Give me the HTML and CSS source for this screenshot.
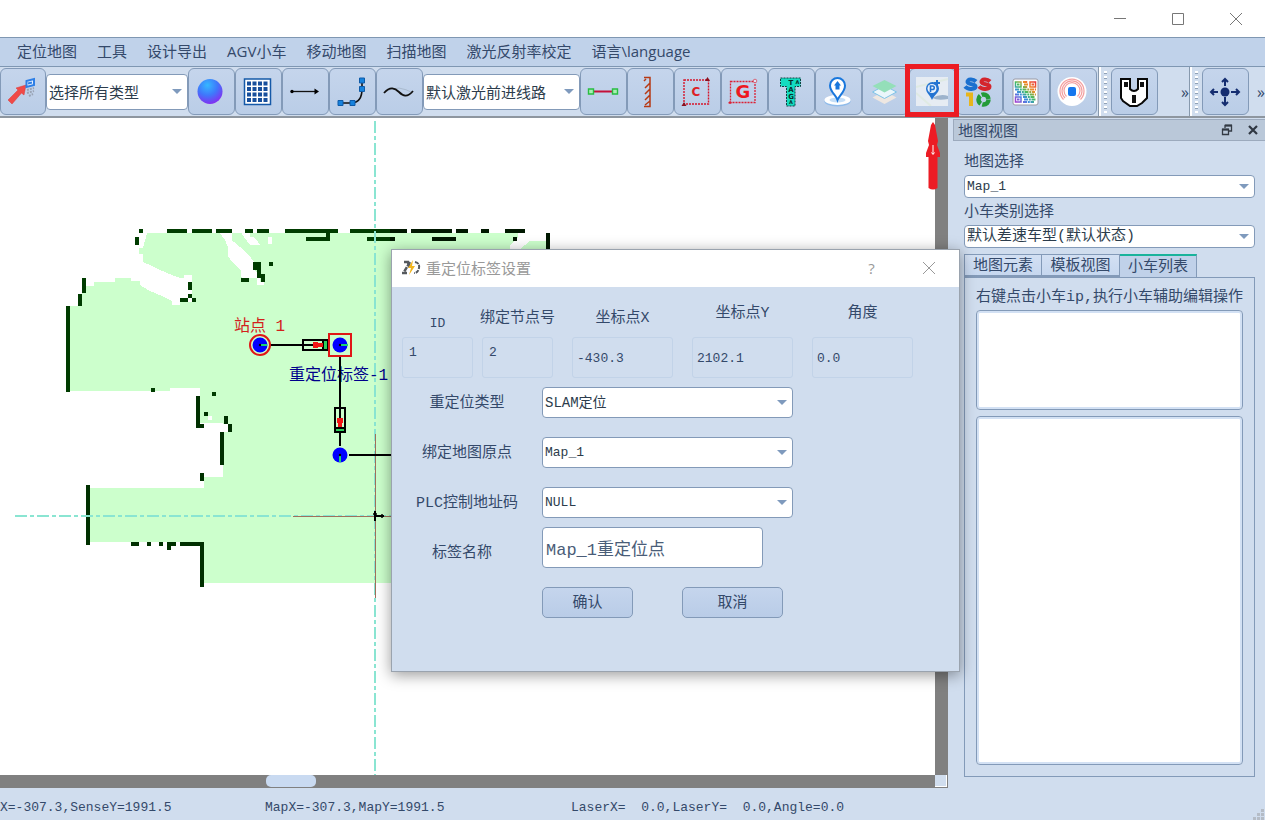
FILE: index.html
```html
<!DOCTYPE html>
<html lang="zh-CN">
<head>
<meta charset="utf-8">
<title>重定位标签设置</title>
<link rel="stylesheet" href="styles.css">
</head>
<body>
<header class="titlebar">
  <button class="win-btn" aria-label="最小化"><svg width="14" height="14" viewBox="0 0 14 14"><path d="M1 6.500H13"/></svg></button>
  <button class="win-btn" aria-label="最大化"><svg width="14" height="14" viewBox="0 0 14 14"><path d="M1.500 1.500H12.500V12.500H1.500Z"/></svg></button>
  <button class="win-btn" aria-label="关闭"><svg width="14" height="14" viewBox="0 0 14 14"><path d="M1 1L13 13M13 1L1 13"/></svg></button>
</header>

<nav class="menubar">
  <a href="#">定位地图</a><a href="#">工具</a><a href="#">设计导出</a><a href="#">AGV小车</a><a href="#">移动地图</a><a href="#">扫描地图</a><a href="#">激光反射率校定</a><a href="#">语言\language</a>
</nav>

<div class="toolbar">
  <div class="tools tools-main">
    <button class="tool tool-first" aria-label="选择"><svg width="32" height="32" viewBox="0 0 32 32"><path d="M1 24L11 14L9 12L19 9L17 19L14.500 17L5 28Z" fill="#f04a48" stroke="#d93838" stroke-width=".5"/><path d="M19.500 5L27 3V9L19.500 11Z" fill="#e8f2ff" stroke="#2e7fe6" stroke-width="2"/><path d="M21 7.500L25 6.500" stroke="#2e7fe6" stroke-width="2"/><path d="M20 14L27 12M20 17L27 15M22 20L26 18" stroke="#9aa4b5" stroke-width="2" stroke-dasharray="2 1"/></svg></button>
    <span class="select tool-select type-select"><select aria-label="元素类型"><option>选择所有类型</option></select></span>
    <button class="tool" aria-label="球体"><svg width="32" height="32" viewBox="0 0 32 32"><defs><radialGradient id="ball" cx=".4" cy=".25" r=".8"><stop offset="0" stop-color="#35b8ff"/><stop offset=".5" stop-color="#3f78fb"/><stop offset="1" stop-color="#8a28f0"/></radialGradient></defs><circle cx="15" cy="15.500" r="12.500" fill="url(#ball)"/></svg></button>
    <button class="tool" aria-label="网格"><svg width="32" height="32" viewBox="0 0 32 32"><path d="M2.500 3H28.500V28.500H2.500Z" fill="#fff" stroke="#1559a8" stroke-width="1.500"/><path d="M5 7.500H27M5 13H27M5 18.500H27M5 24H27" stroke="#174f9c" stroke-width="4" stroke-dasharray="4 1.500"/></svg></button>
    <button class="tool" aria-label="直线"><svg width="32" height="32" viewBox="0 0 32 32"><path d="M3 15.500H26" stroke="#111" stroke-width="1.300"/><circle cx="3" cy="15.500" r="1.700"/><path d="M30 15.500L25.500 12.500V18.500Z"/></svg></button>
    <button class="tool" aria-label="曲线"><svg width="32" height="32" viewBox="0 0 32 32"><path d="M5 27H16Q26 26 26 13V5" fill="none" stroke="#111" stroke-width="1.600"/><path d="M2 24.500H7V29.500H2ZM14 24.500H19V29.500H14ZM23.500 10.500H28.500V15.500H23.500ZM23.500 2H28.500V7H23.500Z" fill="#1682dd" stroke="#0e5ba8"/></svg></button>
    <button class="tool" aria-label="样条"><svg width="32" height="32" viewBox="0 0 32 32"><path d="M2 16Q9 12 16 12Q23 13 30 17" fill="none" stroke="#9fb0c2" stroke-width=".7"/><path d="M1 17C7 10 12 12 16 16S24 22 30 15" fill="none" stroke="#111" stroke-width="1.800"/></svg></button>
    <span class="select tool-select route-select"><select aria-label="默认线路"><option>默认激光前进线路</option></select></span>
    <button class="tool" aria-label="线段"><svg width="32" height="32" viewBox="0 0 32 32"><path d="M5 15.500H27" stroke="#c41039" stroke-width="2"/><path d="M1.500 13H6.500V18H1.500ZM25.500 13H30.500V18H25.500Z" fill="#a9eeb4" stroke="#29bd42" stroke-width="1.400"/></svg></button>
    <button class="tool" aria-label="墙体"><svg width="32" height="32" viewBox="0 0 32 32"><path d="M10 1.500H16V30.500H10M10 5L12 3M11 12L16 7M11 18L16 13M11 24L16 19M11 29L16 25" fill="none" stroke="#b73913" stroke-width="1.500"/></svg></button>
    <button class="tool" aria-label="区域 C"><svg width="32" height="32" viewBox="0 0 32 32"><path d="M3 4H27.500V28H3Z" fill="none" stroke="#d6162b" stroke-width="1.400" stroke-dasharray="2 1"/><path d="M26.500 1L29 5H24ZM3 26L5.500 30H.5Z" fill="#8c101d"/><text x="15" y="20" class="icon-letter icon-c">C</text></svg></button>
    <button class="tool" aria-label="区域 G"><svg width="32" height="32" viewBox="0 0 32 32"><path d="M2.500 5.500H27V26.500H2.500Z" fill="none" stroke="#dc2034" stroke-width="1.300" stroke-dasharray="2 1"/><circle cx="27" cy="5" r="1.800" fill="#dce6f5" stroke="#dc2034" stroke-width=".6"/><path d="M0 27L2 25L4 27L2 28Z" fill="#dc2034"/><text x="15" y="22" class="icon-letter icon-g">G</text></svg></button>
    <button class="tool" aria-label="标签"><svg width="32" height="32" viewBox="0 0 32 32"><path d="M5.500 2H25.500V10.500H20V30H11.500V10.500H5.500Z" fill="#14dcc0" stroke="#133f42" stroke-dasharray="2 1"/><text x="16" y="9" class="icon-letter icon-tag">T</text><text x="16" y="16" class="icon-letter icon-tag">A</text><text x="16" y="23" class="icon-letter icon-tag">G</text><text x="16" y="28" class="icon-letter icon-mini">A</text><text x="22.500" y="8" class="icon-letter icon-mini">A</text></svg></button>
    <button class="tool" aria-label="定位点"><svg width="32" height="32" viewBox="0 0 32 32"><ellipse cx="15.500" cy="25.500" rx="13" ry="5" fill="#8fbbea"/><ellipse cx="15.500" cy="24" rx="13" ry="5" fill="#fff"/><ellipse cx="15.500" cy="24" rx="8" ry="2.500" fill="#c5def6"/><path d="M15.500 24C14 19 8 16 8 9.500A7.500 7.500 0 0 1 23 9.500C23 16 17.500 19 15.500 24Z" fill="#fff" stroke="#1977dc" stroke-width="2"/><path d="M15.500 5L19 9.500H17.500V13.500H13.500V9.500H12Z" fill="#1977dc"/></svg></button>
    <button class="tool" aria-label="图层"><svg width="32" height="32" viewBox="0 0 32 32"><path d="M15.500 15L27.500 21.500L15.500 28L3.500 21.500Z" fill="#eee7e1"/><path d="M15.500 9.500L27.500 16L15.500 22.500L3.500 16Z" fill="#eaf6fb" stroke="#7ec3e8"/><path d="M15.500 4L27.500 10L15.500 16.500L3.500 10Z" fill="#94dfb9"/></svg></button>
    <span class="callout">
      <button class="tool" aria-label="重定位标签"><svg width="32" height="29" viewBox="0 0 32 29"><path d="M0 0H32V29H0Z" fill="#e6ecf3"/><path d="M0 10L32 2M0 16L15 29" stroke="#dfeae3" stroke-width="2"/><path d="M16 21Q25 16 32 19V22Q22 24 16 21" fill="#9db3cc"/><path d="M16 23C14 18 10 16 10 11.500A6.500 6.500 0 0 1 23 11.500C23 16 18 18 16 23Z" fill="#2474d2"/><circle cx="16" cy="11.500" r="4.500" fill="#e9f2fc"/><path d="M14.500 15V9H16.500A1.700 1.700 0 0 1 16.500 12.500H15" fill="none" stroke="#2474d2" stroke-width="1.600"/><path d="M21 3V9M18 6H24" stroke="#2474d2" stroke-width="2"/></svg></button>
      <svg class="callout-arrow" width="14" height="68" viewBox="0 0 14 68"><path d="M7 0L9 3L12 19L11 23L14 31V35H11.500V66Q7 69 2.500 66V35H0V31L3 23L2 19L5 3Z" fill="#ec1c24"/><path d="M7 23V32M5.500 30.500L7 32.500L8.500 30.500" fill="none" stroke="#fff"/></svg>
    </span>
    <button class="tool" aria-label="SSIO"><svg width="32" height="32" viewBox="0 0 32 32"><g fill="none" stroke-width="4"><path d="M13 5.500C10 2.500 4 3 4.500 6S12.500 7.500 12.500 10.500S5 14 2 10.500" stroke="#1b70cf"/><path d="M27 5.500C24 2.500 18 3 18.500 6S26.500 7.500 26.500 10.500S19 14 16 10.500" stroke="#d4252c"/><path d="M3 18.500H8V30" stroke="#e8b51d"/><circle cx="20.500" cy="23.500" r="5" stroke="#249b38" stroke-width="4.500" stroke-dasharray="9 1.500"/></g></svg></button>
    <button class="tool" aria-label="二维码"><svg width="32" height="32" viewBox="0 0 32 32"><defs><linearGradient id="rainbow" gradientUnits="userSpaceOnUse" x1="25" y1="5" x2="6" y2="26"><stop stop-color="#e8333c"/><stop offset=".3" stop-color="#f0902b"/><stop offset=".5" stop-color="#42bd62"/><stop offset=".7" stop-color="#3c8de3"/><stop offset="1" stop-color="#a23ed0"/></linearGradient></defs><rect x="3" y="3" width="25" height="26" rx="2" fill="#fff" stroke="#9b9ba5"/><g fill="none" stroke="url(#rainbow)"><path d="M5.500 6H11V11H5.500ZM20 6H25.500V11H20ZM5.500 21H11V26H5.500Z" stroke-width="1.500"/><path d="M7 8.500H9.500M21.500 8.500H24M7 23.500H9.500" stroke-width="2"/><path d="M13 6H18M14 8.500H18M13 11H18M5 13.500H26M7 16H25M5 18.500H26M13 21H25M14 23.500H26M13 26H24" stroke-width="2.200" stroke-dasharray="4 .8 2 .7"/></g></svg></button>
    <button class="tool" aria-label="雷达"><svg width="32" height="32" viewBox="0 0 32 32"><circle cx="15" cy="15.500" r="14.500" fill="#fff"/><g fill="none" stroke="#f4a0a0" stroke-width="1.200"><path d="M6.500 23.500A12 12 0 1 1 23.500 23.500"/><path d="M8 22A10 10 0 1 1 22 22"/><path d="M9.500 20.500A8 8 0 1 1 20.500 20.500"/></g><circle cx="15" cy="15.500" r="6" fill="#fff"/><rect x="11" y="11" width="8" height="9" rx="2" fill="#1677ee"/></svg></button>
  </div>
  <div class="tools tools-side">
    <span class="grip"></span>
    <button class="tool" aria-label="插座"><svg width="32" height="32" viewBox="0 0 32 32"><path d="M3 3H12V13Q16 17 20 13V3H29V22L24 27L19 30H12L5 25L3 22Z" fill="#fff" stroke="#080808" stroke-width="2"/><path d="M6 6H10V11H6ZM22 6H26V11H22ZM14 19H18V27H14Z" fill="#111"/></svg></button>
    <button class="more" aria-label="更多工具">»</button>
  </div>
  <div class="tools tools-move">
    <span class="grip"></span>
    <button class="tool" aria-label="移动"><svg width="32" height="32" viewBox="0 0 32 32"><path d="M16 3V10M16 21V29M2 16H9M22 16H30M13 6L16 3L19 6M13 26L16 29L19 26M5 13L2 16L5 19M27 13L30 16L27 19" fill="none" stroke="#142d70" stroke-width="2"/><circle cx="16" cy="16" r="4.500" fill="#142d70"/></svg></button>
    <button class="more" aria-label="更多操作">»</button>
  </div>
</div>

<main class="workspace">
  <section class="map-view" aria-label="地图">
    <div class="map-canvas">
      <svg width="935" height="657" viewBox="0 118 935 657">
        <g shape-rendering="crispEdges">
          <path fill="#cfc" d="M147 233H518V238L510 245V249H520L530 241H547V583H204V542H90V488H204V477H223V423H200V388H170V391H70V306H82V294L86 286H94V282H115V278H131V281H140V285L148 290L164 297L172 301V305H180V302H192V275H184V278H180L172 275L160 270L150 265L143 262V254H139V248H143Z"/>
          <g transform="translate(50 220) scale(.333333)">
            <path fill="#fff" d="M510 40H545V60L575 85L600 110L612 125V150L630 165V185H642V195H620V175H575L572 150L550 130L535 110L533 80L525 60ZM575 40H600V50H610L632 75H600L585 55ZM655 50H667V72H655Z"/>
            <path fill="#003c00" d="M268 28h11v11h-11zM255 52h12v22h-12zM352 28h60v11h-60zM427 28h60v11h-60zM499 28h48v11h-48zM585 28h24v11h-24zM621 28h36v11h-36zM705 28h158v11h-158zM828 38h11v24h-11zM768 52h60v11h-60zM900 28h120v11h-120zM952 52h68v11h-68zM97 175h11v45h-11zM85 222h11v36h-11zM48 258h12v257h-12zM415 187h11v24h-11zM414 222h12v12h-12zM390 235h24v11h-24zM426 235h12v11h-12zM609 127h24v24h-24zM657 127h12v11h-12zM622 150h12v24h-12zM573 175h24v11h-24zM634 162h11v24h-11zM303 504h12v12h-12zM486 516h12v12h-12z"/>
          </g>
          <g transform="translate(60 380) scale(.333333)">
            <path fill="#fff" d="M444 108h12v11h-12zM480 132h24v24h-24z"/>
            <path fill="#003000" d="M408 48h12v95h-12zM420 132h12v11h-12zM432 97h12v11h-12zM492 108h12v24h-12zM504 132h12v24h-12zM480 156h12v98h-12zM420 280h12v24h-12zM78 316h12v180h-12zM213 486h24v11h-24zM261 486h12v11h-12zM297 486h12v11h-12zM321 486h27v11h-27zM321 497h12v12h-12zM360 486h72v11h-72zM420 486h12v134h-12z"/>
          </g>
          <g transform="translate(390 220) scale(.333333)">
            <path fill="#001800" d="M0 28h50v11h-50zM63 28h123v11h-123zM198 28h36v11h-36zM273 28h24v11h-24zM345 28h60v11h-60zM369 52h12v11h-12zM126 52h72v11h-72zM0 52h16v11h-16zM468 40h12v50h-12zM393 86h12v4h-12z"/>
          </g>
        </g>
        <g stroke="#8ae5d2" stroke-width="2" stroke-dasharray="12 3 4 3"><path d="M375 121V775"/><path d="M15 516H391"/></g>
        <path d="M375.500 434V598M293 516.500H391" stroke="#a0705c"/>
        <path d="M375 511V521M375 516H384" fill="none" stroke="#000" stroke-width="2"/><path d="M373 514H377M382 514V518" stroke="#000" stroke-width="1.500"/>
        <text x="234" y="331" class="map-text station">站点 1</text>
        <text x="289" y="380" class="map-text marker">重定位标签-1</text>
        <path d="M270 345H330M340 356V446M349 455H391" stroke="#000" stroke-width="2"/>
        <g fill="none" stroke="#000" stroke-width="2">
          <path d="M303 340H327V350H303ZM323 340V350M335 408V432H345V408ZM335 428H345"/>
        </g>
        <path d="M313 342H318V343H323V347H318V348H313ZM337 418H343V423H342V427H338V423H337Z" fill="#f31515"/>
        <path d="M324 341H327V349H324ZM336 429H344V431H336Z" fill="#2fd05b"/>
        <g fill="#00f"><circle cx="260" cy="345" r="7.500"/><circle cx="340" cy="345" r="7.500"/><circle cx="340" cy="455" r="7.500"/></g>
        <circle cx="260" cy="345" r="10" fill="none" stroke="#e01616" stroke-width="2"/>
        <path d="M329 334H351V356H329Z" fill="none" stroke="#e01616" stroke-width="2"/>
        <path d="M261 345H267M341 345H348M340 456V462" stroke="#1bd274" stroke-width="2"/>
        <g><circle cx="260" cy="345" r="1.200"/><circle cx="340" cy="345" r="1.200"/><circle cx="340" cy="455" r="1.200"/></g>
      </svg>
    </div>
    <div class="scroll-v"></div>
    <div class="scroll-h"><span class="scroll-thumb"></span></div>
    <div class="scroll-corner"></div>
  </section>

  <aside class="dock">
    <header class="dock-title"><h2>地图视图</h2>
      <button class="dock-btn" aria-label="浮动"><svg width="12" height="12" viewBox="0 0 12 12"><path d="M4 4V1.500H10.500V7H8M1.500 5.500H7.500V10.500H1.500Z" fill="none" stroke="#333a44" stroke-width="1.300"/><path d="M4 1.500H11M1 5.500H8" stroke="#333a44" stroke-width="2"/></svg></button>
      <button class="dock-btn" aria-label="关闭面板"><svg width="12" height="12" viewBox="0 0 12 12"><path d="M2 2L10 10M10 2L2 10" stroke="#2f3742" stroke-width="2.200"/></svg></button>
    </header>
    <div class="dock-body">
      <label for="map">地图选择</label>
      <span class="select"><select id="map" class="ascii"><option>Map_1</option></select></span>
      <label for="car">小车类别选择</label>
      <span class="select"><select id="car"><option>默认差速车型(默认状态)</option></select></span>
      <div class="tabs" role="tablist">
        <button role="tab" class="tab">地图元素</button><button role="tab" class="tab">模板视图</button><button role="tab" class="tab tab-active" aria-selected="true">小车列表</button>
      </div>
      <div class="tab-panel">
        <p>右键点击小车ip,执行小车辅助编辑操作</p>
        <div class="list list-short"></div>
        <div class="list list-long"></div>
      </div>
    </div>
  </aside>
</main>

<footer class="statusbar">
  <span class="status-sense">X=-307.3,SenseY=1991.5</span>
  <span class="status-map">MapX=-307.3,MapY=1991.5</span>
  <span>LaserX=  0.0,LaserY=  0.0,Angle=0.0</span>
  <svg class="size-grip" width="12" height="12" viewBox="0 0 12 12"><path d="M8 1h3v3h-3zM4 5h3v3h-3zM8 5h3v3h-3zM0 9h3v3h-3zM4 9h3v3h-3zM8 9h3v3h-3z" fill="#b5bcc6"/></svg>
</footer>

<div class="dialog" role="dialog" aria-labelledby="dialog-title">
  <header class="dialog-title">
    <svg width="20" height="18" viewBox="0 0 20 18"><path d="M3 3H9L3 13M1 14H6M7 4L9 9" fill="none" stroke="#55595e" stroke-width="2.500" stroke-dasharray="5 1"/><path d="M14 3Q19 4 18 9T13 14" fill="none" stroke="#55595e" stroke-width="2" stroke-dasharray="4 1"/><path d="M12 1L7 9H10L8 16L14 7H11Z" fill="#f2b51d"/></svg>
    <h1 id="dialog-title">重定位标签设置</h1>
    <button class="dialog-btn" aria-label="帮助">?</button>
    <button class="dialog-btn" aria-label="关闭对话框"><svg width="14" height="14" viewBox="0 0 14 14"><path d="M1 1L13 13M13 1L1 13"/></svg></button>
  </header>
  <form class="dialog-form">
    <div class="fields">
      <div class="field narrow"><label for="f-id" class="low">ID</label><input id="f-id" value="1" readonly></div>
      <div class="field narrow"><label for="f-node">绑定节点号</label><input id="f-node" value="2" readonly></div>
      <div class="field wide"><label for="f-x">坐标点X</label><input id="f-x" value="-430.3" readonly></div>
      <div class="field wide"><label for="f-y" class="high">坐标点Y</label><input id="f-y" value="2102.1" readonly></div>
      <div class="field wide"><label for="f-a" class="high">角度</label><input id="f-a" value="0.0" readonly></div>
    </div>
    <div class="rows">
      <label for="r-type">重定位类型</label><span class="select"><select id="r-type" class="mixed"><option>SLAM定位</option></select></span>
      <label for="r-origin">绑定地图原点</label><span class="select"><select id="r-origin" class="ascii"><option>Map_1</option></select></span>
      <label for="r-plc">PLC控制地址码</label><span class="select"><select id="r-plc" class="ascii"><option>NULL</option></select></span>
    </div>
    <div class="name-row"><label for="r-name">标签名称</label><input id="r-name" value="Map_1重定位点"></div>
    <div class="actions"><button type="button" class="btn ok">确认</button><button type="button" class="btn cancel">取消</button></div>
  </form>
</div>
</body>
</html>
```

FILE: styles.css
```css
* { box-sizing: border-box; }
:root {
  --bg: #d0ddee;
  --line: #839ab8;
  --ink: #34496a;
  --mono: "Liberation Mono", "Noto Sans CJK SC", monospace;
  --ui: "Open Sans", "Noto Sans CJK SC", sans-serif;
}
body {
  margin: 0;
  height: 100vh;
  display: flex;
  flex-direction: column;
  overflow: hidden;
  position: relative;
  background: var(--bg);
  color: var(--ink);
  font: 15px/20px var(--mono);
}
button, select, input { font: inherit; color: inherit; margin: 0; }
button { padding: 0; border: 0; background: none; }
h1, h2, p { margin: 0; font-weight: 400; font-size: 15px; }

.titlebar { flex: none; height: 37px; background: #fff; display: flex; justify-content: flex-end; align-items: center; }
.win-btn { width: 58px; height: 36px; display: grid; place-items: center; }
.win-btn svg, .dialog-btn svg { fill: none; stroke: #777; }
.dialog-btn svg { stroke: #999; }

.menubar {
  flex: none; height: 30px; display: flex; align-items: center; gap: 20px; padding: 0 17px 2px;
  background: #c0d2ea; border: solid #7f97b2; border-width: 1px 0; font-family: var(--ui);
}
.menubar a { color: inherit; text-decoration: none; white-space: nowrap; }

.toolbar { flex: none; height: 51px; display: flex; position: relative; z-index: 1; border-bottom: 2px solid #8e969f; }
.tools { display: flex; align-items: center; }
.tools-side, .tools-move { border-left: 2px solid #fff; box-shadow: -1px 0 #8799ad; }
.tools-main { width: 1099px; flex: none; }
.tools-side { width: 91px; flex: none; }
.tools-move { flex: 1; }
.tool {
  flex: none; width: 47px; height: 47px; display: grid; place-items: center start; padding-left: 6px;
  border: 1px solid var(--line); border-radius: 6px; background: linear-gradient(#c5d5ec, #bacde7);
}
.tool-first { width: 46px; }
.tool svg { display: block; }
.icon-letter { font-family: "DejaVu Sans", sans-serif; font-weight: 700; text-anchor: middle; }
.icon-c { font-size: 12px; fill: #dd2026; }
.icon-g { font-size: 18px; fill: #ee1720; }
.icon-tag { font-size: 7px; fill: #092d2b; }
.icon-mini { font-size: 5px; fill: #092d2b; }
.callout { position: relative; z-index: 2; }
.callout::after { content: ""; position: absolute; inset: -4px -3px -2px -4px; border: 5px solid #ec1c24; pointer-events: none; }
.callout-arrow { position: absolute; top: 54px; left: 17px; }
.grip { width: 3px; height: 42px; margin: 0 4px 0 3px; background: repeating-linear-gradient(#fff 0 2px, #8fa1b6 2px 3px, transparent 3px 5px); }
.more { flex: 1; text-align: right; padding-right: 1px; font: 16px/20px var(--ui); }
.tools-move .more { padding-right: 0; }

.select { position: relative; display: block; }
.select select {
  appearance: none; display: block; width: 100%; height: 100%; padding: 1px 24px 0 2px;
  border: 1px solid var(--line); border-radius: 4px; background: #fff; color: #2c3c4c;
}
.select::after {
  content: ""; position: absolute; right: 6px; top: calc(50% - 3px); pointer-events: none;
  border: solid transparent; border-width: 5px 5px 0; border-top-color: #7f9abd;
}
.select select.ascii { font-size: 13px; }
.select select.mixed { font-size: 14px; }
.tool-select { flex: none; height: 36px; font-family: "Noto Sans CJK SC", sans-serif; }
.tool-select select { padding-top: 0; }
.type-select { width: 142px; }
.route-select { width: 157px; }

.workspace { flex: 1; min-height: 0; display: flex; gap: 5px; }
.map-view { flex: 1; min-width: 0; display: grid; grid-template: 1fr 13px / 1fr 13px; background: #808080; }
.map-canvas { background: #fff; overflow: hidden; min-height: 0; min-width: 0; }
.map-canvas svg { display: block; }
.map-text { font: 16px var(--mono); }
.station { fill: #d3201b; }
.marker { fill: #00008b; }
.scroll-h { display: flex; padding-bottom: 1px; }
.scroll-thumb { width: 50px; margin-left: 28.5%; background: #c9daf1; border-radius: 5px; }
.scroll-corner { background: #d0ddee; border: solid #808080; border-width: 0 1px 1px 0; box-shadow: inset -1px -1px #fff; }

.dock { flex: none; width: 312px; display: flex; flex-direction: column; padding-top: 1px; }
.dock-title { height: 22px; display: flex; align-items: center; gap: 14px; padding: 0 6px 1px 4px; border: 1px solid #9caabd; border-right: 0; background: #bac8d9; }
.dock-title h2 { flex: 1; font-family: "Noto Sans CJK SC", sans-serif; }
.dock-btn { width: 12px; height: 12px; }
.dock-btn svg { display: block; }
.dock-body { flex: 1; min-height: 0; display: flex; flex-direction: column; padding: 12px 10px 11px 11px; }
.dock-body label { line-height: 20px; margin-bottom: 2px; }
.dock-body .select { height: 23px; margin-bottom: 5px; flex: none; }
.tabs { display: flex; margin-top: 1px; }
.tab { height: 23px; width: 78px; padding-top: 3px; line-height: 18px; border: 1px solid var(--line); border-bottom-width: 2px; background: linear-gradient(#d3e0f3, #c6d7ef); }
.tab + .tab { border-left: 0; }
.tab + .tab-active { width: 77px; padding-top: 2px; border-bottom: 0; border-top: 2px solid #19b39b; background: #c0d1e9; }
.tab-panel { flex: 1; min-height: 0; display: flex; flex-direction: column; gap: 6px; border: 1px solid var(--line); padding: 10px 11px 11px; }
.tab-panel p { line-height: 20px; margin-bottom: -4px; white-space: nowrap; }
.list { background: #fff; border: 1px solid var(--line); border-radius: 4px; box-shadow: inset 0 0 0 2px #d3e1f4; }
.list-short { flex: none; height: 100px; }
.list-long { flex: 1; }

.statusbar { flex: none; height: 32px; display: flex; align-items: center; padding-top: 8px; position: relative; font-size: 13px; white-space: pre; }
.status-sense { width: 265px; }
.status-map { width: 306px; }
.size-grip { position: absolute; right: 0; bottom: 0; }

.dialog { position: absolute; left: 391px; top: 249px; z-index: 3; width: 569px; height: 423px; background: var(--bg); border: 1px solid #9aa3ae; box-shadow: 0 3px 14px rgba(0, 0, 0, .4); }
.dialog-title { height: 37px; display: flex; align-items: center; padding: 0 2px 2px 9px; background: #fff; color: #999; }
.dialog-title h1 { flex: 1; margin-left: 5px; font-family: "Noto Sans CJK SC", sans-serif; }
.dialog-btn { width: 57px; height: 36px; display: grid; place-items: center; font-family: var(--ui); }
.dialog-form { padding: 12px 10px; }
.fields { display: flex; align-items: flex-end; height: 79px; }
.field { display: flex; flex-direction: column; align-items: center; flex: none; }
.field label { height: 20px; margin-bottom: 8px; white-space: nowrap; }
.field .low { margin-bottom: 3px; font-size: 13px; }
.field .high { margin-bottom: 13px; }
.field input { width: 100%; height: 41px; border: 1px solid #c2d3e8; border-radius: 3px; background: transparent; font-size: 13px; padding: 2px 4px 0; }
.narrow { width: 71px; margin-right: 9px; }
.field.narrow input { padding: 0 6px 10px; }
.narrow + .wide { margin-left: 10px; }
.wide { width: 101px; }
.wide + .wide { margin-left: 19px; }
.rows { display: grid; grid-template-columns: 130px 251px; column-gap: 10px; row-gap: 19px; align-items: center; margin-top: 9px; text-align: center; }
.rows label { padding-top: 3px; }
.rows .select { height: 31px; }
.name-row { display: grid; grid-template-columns: 120px 221px; column-gap: 20px; margin-top: 9px; align-items: end; text-align: center; }
.name-row label { line-height: 28px; }
.name-row input { height: 41px; border: 1px solid var(--line); border-radius: 4px; background: #fff; padding: 0 3px; font-size: 17px; color: #4a5d78; }
.actions { display: flex; gap: 49px; margin: 19px 0 0 140px; }
.btn { height: 31px; padding-top: 2px; border: 1px solid var(--line); border-radius: 5px; background: linear-gradient(#c5d5ed, #b9cce7); }
.ok { width: 91px; }
.cancel { width: 101px; }
```
